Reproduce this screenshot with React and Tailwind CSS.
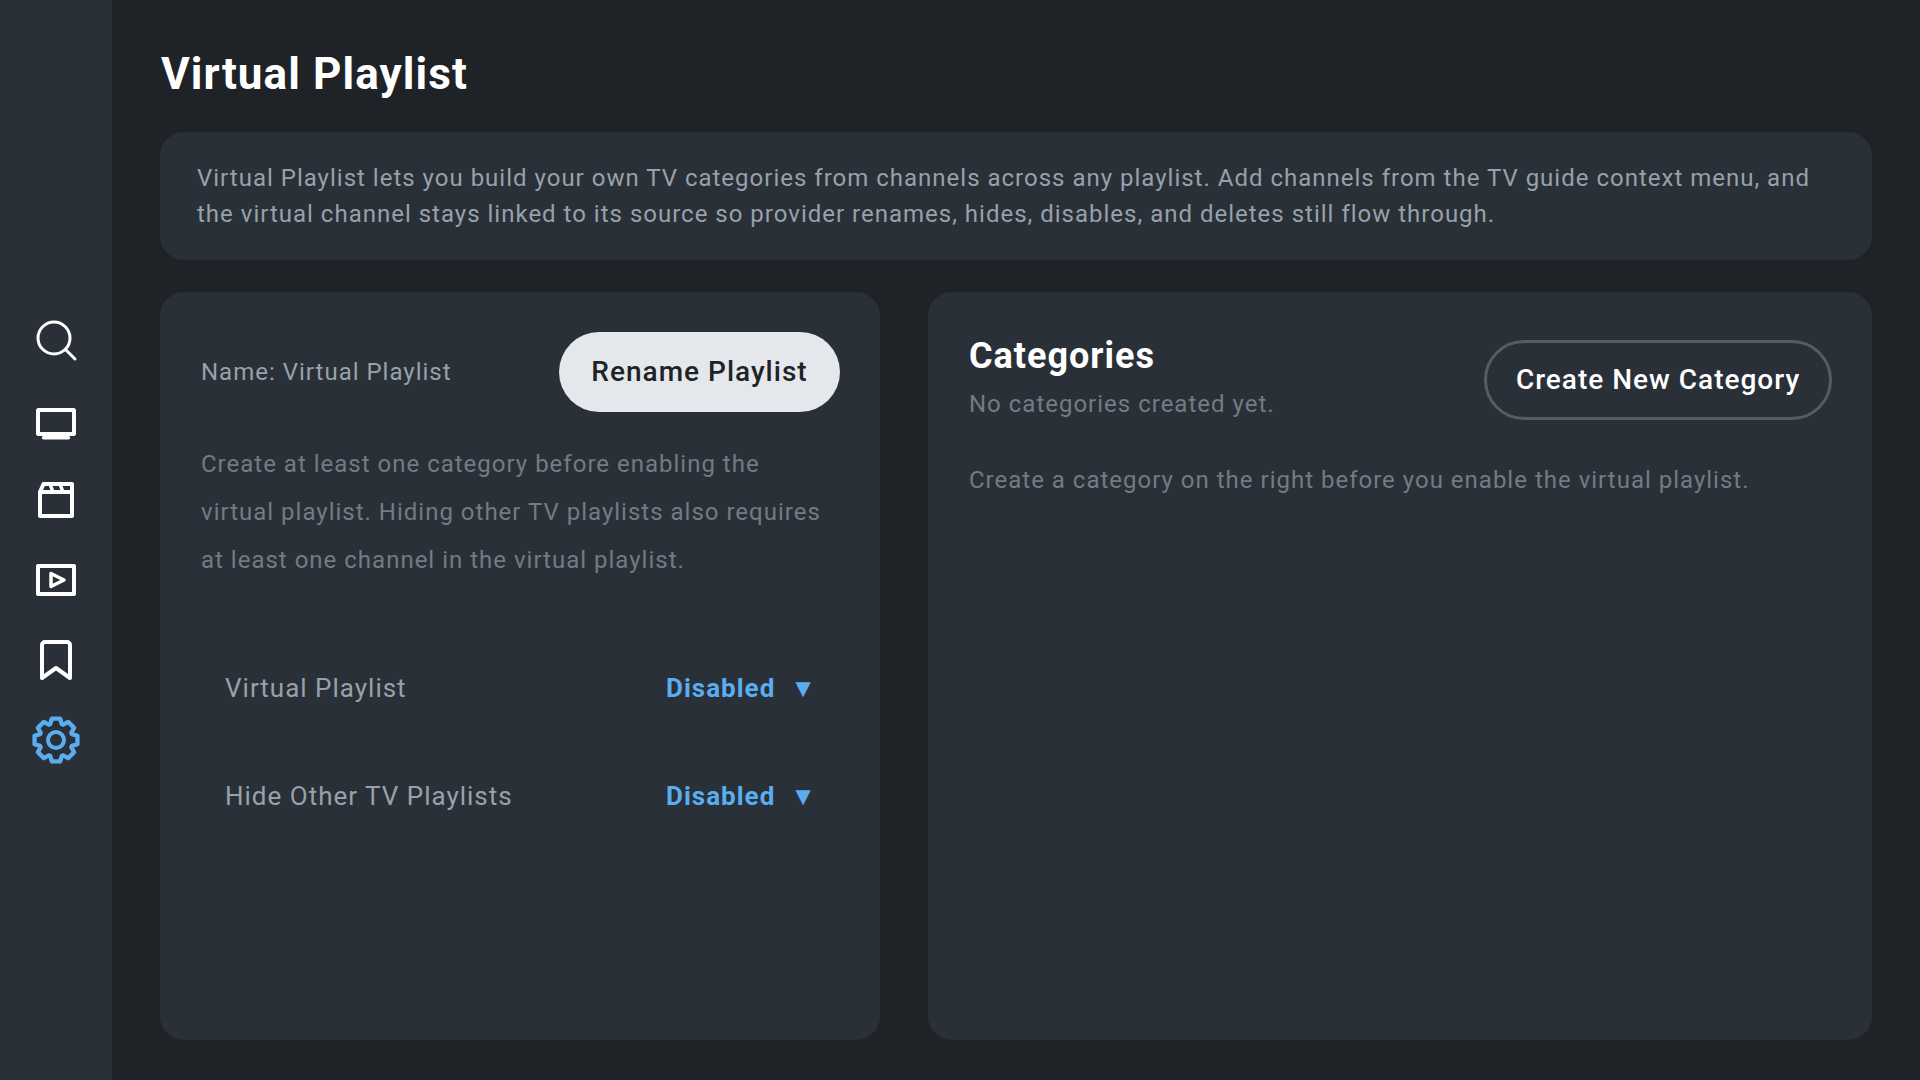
import React from "react";

const navItems = [
  { id: "search", icon: <SearchIcon /> },
  { id: "tv", icon: <TvIcon /> },
  { id: "movies", icon: <ClapperIcon /> },
  { id: "series", icon: <PlayIcon /> },
  { id: "saved", icon: <BookmarkIcon /> },
  { id: "settings", icon: <GearIcon /> },
];

function SearchIcon() {
  return (
    <svg width="48" height="48" viewBox="0 0 48 48" fill="none" stroke="#fff" strokeWidth="3" strokeLinecap="round">
      <circle cx="22" cy="22" r="16" />
      <path d="M34 34l9 9" />
    </svg>
  );
}

function TvIcon() {
  return (
    <svg width="48" height="48" viewBox="0 0 48 48" fill="none" stroke="#fff" strokeLinejoin="round">
      <rect x="6" y="14" width="36" height="24" rx="0.5" strokeWidth="4" />
      <path d="M11.5 41.8h25" strokeWidth="3.5" strokeLinecap="round" />
    </svg>
  );
}

function ClapperIcon() {
  return (
    <svg width="48" height="48" viewBox="0 0 48 48" fill="none" stroke="#fff" strokeWidth="4" strokeLinejoin="round">
      <path d="M8 16l3.5-8H40v32H8z" />
      <path d="M8 16h32" />
      <path d="M18 8l3 8M28 8l3 8" strokeWidth="3.5" />
    </svg>
  );
}

function PlayIcon() {
  return (
    <svg width="48" height="48" viewBox="0 0 48 48" fill="none" stroke="#fff" strokeWidth="4" strokeLinejoin="round">
      <rect x="6" y="10" width="36" height="28" />
      <path d="M19 17.5v13L32 24z" strokeWidth="3.5" />
    </svg>
  );
}

function BookmarkIcon() {
  return (
    <svg width="48" height="48" viewBox="0 0 48 48" fill="none" stroke="#fff" strokeWidth="4" strokeLinejoin="round">
      <path d="M10 42V9a3 3 0 0 1 3-3h22a3 3 0 0 1 3 3v33L24 32z" />
    </svg>
  );
}

// 8 teeth, one pointing straight up
function gearPath() {
  const pts = [];
  const at = (deg, r) => {
    const rad = ((deg - 90) * Math.PI) / 180;
    return `${(24 + r * Math.cos(rad)).toFixed(2)} ${(24 + r * Math.sin(rad)).toFixed(2)}`;
  };
  for (let i = 0; i < 8; i++) {
    const a = i * 45;
    pts.push(at(a - 20, 17), at(a - 11, 21.8), at(a + 11, 21.8), at(a + 20, 17));
  }
  return `M${pts.join("L")}Z`;
}

function GearIcon() {
  return (
    <svg width="48" height="48" viewBox="0 0 48 48" fill="none" stroke="#5aaef0" strokeWidth="4.4" strokeLinejoin="round">
      <path d={gearPath()} />
      <circle cx="24" cy="24" r="8" strokeWidth="4" />
    </svg>
  );
}

function ToggleRow({ label, value }) {
  return (
    <div className="flex items-center justify-between h-[108px] pl-6 pr-6 text-[26px]">
      <span className="text-[#98a1aa]">{label}</span>
      <span className="flex items-center gap-[15px] text-[#5aaef0] font-bold">
        {value}
        <span className="text-[26px] leading-none tracking-normal">▼</span>
      </span>
    </div>
  );
}

export default function App() {
  return (
    <div className="flex h-screen bg-[#1f2327] text-[24px] tracking-[1px] font-['Roboto',sans-serif] overflow-hidden">
      <nav className="w-[112px] shrink-0 bg-[#2a3038] flex flex-col justify-center">
        {navItems.map((item) => (
          <div key={item.id} className="h-[80px] flex items-center justify-center">
            {item.icon}
          </div>
        ))}
      </nav>

      <main className="flex-1 min-w-0 flex flex-col pl-12 pr-12 pb-10">
        <h1 className="h-[132px] pt-[16px] pl-[1px] flex items-center text-[44px] font-bold text-white tracking-[1.1px]">
          Virtual Playlist
        </h1>

        <div className="h-[128px] mb-8 px-[37px] py-[28px] rounded-[24px] bg-[#2a3038] text-[#98a1aa] leading-[36px]">
          Virtual Playlist lets you build your own TV categories from channels across any playlist. Add channels from the TV guide context menu, and the virtual channel stays linked to its source so provider renames, hides, disables, and deletes still flow through.
        </div>

        <div className="flex-1 min-h-0 flex gap-12">
          <section className="w-[720px] shrink-0 rounded-[24px] bg-[#2a3038] py-10 pl-[41px] pr-10">
            <div className="flex items-center justify-between">
              <span className="text-[#98a1aa]">Name: Virtual Playlist</span>
              <button className="h-20 w-[281px] rounded-full bg-[#e4e7ec] text-[#1f2327] text-[28px] font-medium">
                Rename Playlist
              </button>
            </div>
            <p className="mt-[28px] mb-[50px] pr-2 text-[#737b84] leading-[48px]">
              Create at least one category before enabling the virtual playlist. Hiding other TV playlists also requires at least one channel in the virtual playlist.
            </p>
            <ToggleRow label="Virtual Playlist" value="Disabled" />
            <ToggleRow label="Hide Other TV Playlists" value="Disabled" />
          </section>

          <section className="flex-1 min-w-0 rounded-[24px] bg-[#2a3038] py-10 pl-[41px] pr-10">
            <div className="flex items-start justify-between">
              <div className="pt-[2px]">
                <h2 className="text-[36px] leading-[44px] font-bold text-white">Categories</h2>
                <p className="mt-[10px] text-[#737b84] leading-[32px]">No categories created yet.</p>
              </div>
              <button className="mt-[8px] h-20 w-[348px] rounded-full border-[3px] border-[#565c64] text-white text-[28px] font-medium">
                Create New Category
              </button>
            </div>
            <p className="mt-[44px] text-[#737b84] leading-[32px]">
              Create a category on the right before you enable the virtual playlist.
            </p>
          </section>
        </div>
      </main>
    </div>
  );
}
